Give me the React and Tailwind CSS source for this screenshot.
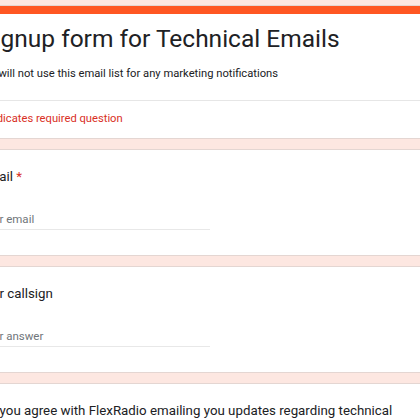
export default function App() {
  return (
    <div className="w-[420px] h-[420px] overflow-hidden bg-[#fde7e1] font-['Roboto',sans-serif] text-[#202124]">
      <div className="ml-[-40px] w-[520px] pt-[5px] flex flex-col gap-[10px]">
        {/* header card */}
        <div className="bg-white rounded-[7px] border border-[#e4d6d2] overflow-hidden">
          <div className="h-[8px] bg-[#ff5722]" />
          <div className="px-[19px] pt-[9px] pb-[18px] border-b border-[#e6e6e6]">
            <div className="text-[24.5px] leading-[32px]">Signup form for Technical Emails</div>
            <div className="mt-[11px] text-[11.2px] leading-[16px]">We will not use this email list for any marketing notifications</div>
          </div>
          <div className="px-[19px] h-[37px] flex items-center text-[11.2px] text-[#d93025]">* Indicates required question</div>
        </div>

        {/* email */}
        <div className="bg-white rounded-[7px] border border-[#e4d6d2] px-[19px] pt-[17px] pb-[25px]">
          <div className="text-[13.3px] leading-[20px]">
            Email <span className="text-[#d93025]">*</span>
          </div>
          <div className="mt-[24px] w-[230px] border-b border-[#e8e8e8] pb-[2px] text-[11.5px] leading-[16px] text-[#70757a]">Your email</div>
        </div>

        {/* callsign */}
        <div className="bg-white rounded-[7px] border border-[#e4d6d2] px-[19px] pt-[17px] pb-[25px]">
          <div className="ml-[-3px] text-[13.3px] leading-[20px]">Your callsign</div>
          <div className="mt-[24px] w-[230px] border-b border-[#e8e8e8] pb-[2px] text-[11.5px] leading-[16px] text-[#70757a]">Your answer</div>
        </div>

        {/* agreement */}
        <div className="bg-white rounded-[7px] border border-[#e4d6d2] px-[19px] pt-[17px] pb-[25px]">
          <div className="text-[13.3px] leading-[20px]">Do you agree with FlexRadio emailing you updates regarding technical information?</div>
        </div>
      </div>
    </div>
  );
}
